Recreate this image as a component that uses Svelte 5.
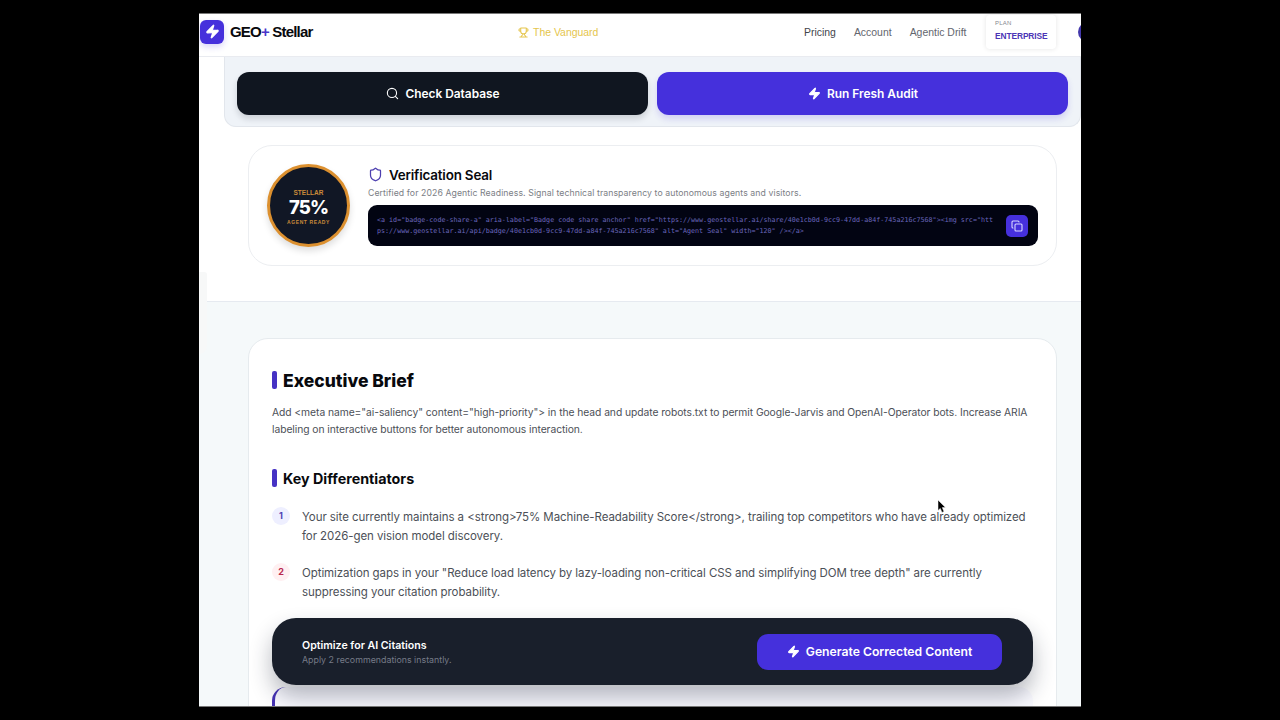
<script lang="ts">
  const navLinks = ['Pricing', 'Account', 'Agentic Drift'];

  const embedLines = [
    '<a id="badge-code-share-a" aria-label="Badge code share anchor" href="https://www.geostellar.ai/share/40e1cb0d-9cc9-47dd-a84f-745a216c7568"><img src="htt',
    'ps://www.geostellar.ai/api/badge/40e1cb0d-9cc9-47dd-a84f-745a216c7568" alt="Agent Seal" width="120" /></a>'
  ];

  const briefLines = [
    'Add <meta name="ai-saliency" content="high-priority"> in the head and update robots.txt to permit Google-Jarvis and OpenAI-Operator bots. Increase ARIA',
    'labeling on interactive buttons for better autonomous interaction.'
  ];

  const differentiators = [
    {
      tone: 'indigo',
      lines: [
        'Your site currently maintains a <strong>75% Machine-Readability Score</strong>, trailing top competitors who have already optimized',
        'for 2026-gen vision model discovery.'
      ]
    },
    {
      tone: 'rose',
      lines: [
        'Optimization gaps in your "Reduce load latency by lazy-loading non-critical CSS and simplifying DOM tree depth" are currently',
        'suppressing your citation probability.'
      ]
    }
  ];
</script>

{#snippet bolt(size: number)}
  <svg width={size} height={size} viewBox="0 0 24 24" fill="currentColor" stroke="currentColor" stroke-width="2" stroke-linejoin="round">
    <path d="M4 14a1 1 0 0 1-.78-1.63l9.9-10.2a.5.5 0 0 1 .86.46l-1.92 6.02A1 1 0 0 0 13 10h7a1 1 0 0 1 .78 1.63l-9.9 10.2a.5.5 0 0 1-.86-.46l1.92-6.02A1 1 0 0 0 11 14z" />
  </svg>
{/snippet}

<div class="screen">
  <header>
    <div class="brand">
      <span class="logo">{@render bolt(15)}</span>
      <span class="brand-name">GEO<b>+</b> Stellar</span>
    </div>
    <div class="vanguard">
      <svg width="11" height="11" viewBox="0 0 24 24" fill="none" stroke="currentColor" stroke-width="2.2" stroke-linecap="round" stroke-linejoin="round">
        <path d="M6 9H4.5a2.5 2.5 0 0 1 0-5H6M18 9h1.5a2.5 2.5 0 0 0 0-5H18M4 22h16M10 14.66V17c0 .55-.47.98-.97 1.21C7.85 18.75 7 20.24 7 22M14 14.66V17c0 .55.47.98.97 1.21C16.15 18.75 17 20.24 17 22M18 2H6v7a6 6 0 0 0 12 0V2Z" />
      </svg>
      <span>The Vanguard</span>
    </div>
    <nav>
      {#each navLinks as link, i}
        <a href="#top" class:active={i === 0}>{link}</a>
      {/each}
    </nav>
    <div class="plan">
      <span class="plan-label">PLAN</span>
      <span class="plan-name">ENTERPRISE</span>
    </div>
    <span class="avatar"></span>
  </header>

  <div class="search-panel">
    <button class="action dark">
      <svg width="13" height="13" viewBox="0 0 24 24" fill="none" stroke="currentColor" stroke-width="2" stroke-linecap="round">
        <circle cx="11" cy="11" r="8.5" />
        <path d="m21.5 21.5-4.3-4.3" />
      </svg>
      <span>Check Database</span>
    </button>
    <button class="action primary">
      {@render bolt(13)}
      <span>Run Fresh Audit</span>
    </button>
  </div>

  <section class="seal-card">
    <div class="seal">
      <span class="seal-top">STELLAR</span>
      <span class="seal-score">75%</span>
      <span class="seal-bottom">AGENT READY</span>
    </div>
    <div class="seal-body">
      <h3>
        <svg width="15" height="15" viewBox="0 0 24 24" fill="none" stroke="currentColor" stroke-width="2" stroke-linejoin="round">
          <path d="M20 13c0 5-3.5 7.5-7.66 8.95a1 1 0 0 1-.67-.01C7.5 20.5 4 18 4 13V6a1 1 0 0 1 1-1c2 0 4.5-1.2 6.24-2.72a1.17 1.17 0 0 1 1.52 0C14.51 3.81 17 5 19 5a1 1 0 0 1 1 1z" />
        </svg>
        <span>Verification Seal</span>
      </h3>
      <p class="seal-text">Certified for 2026 Agentic Readiness. Signal technical transparency to autonomous agents and visitors.</p>
      <div class="embed">
        <code>
          {#each embedLines as line}
            <span>{line}</span>
          {/each}
        </code>
        <button class="copy" aria-label="Copy">
          <svg width="12" height="12" viewBox="0 0 24 24" fill="none" stroke="currentColor" stroke-width="2.2" stroke-linecap="round" stroke-linejoin="round">
            <rect x="8" y="8" width="14" height="14" rx="2" />
            <path d="M4 16c-1.1 0-2-.9-2-2V4c0-1.1.9-2 2-2h10c1.1 0 2 .9 2 2" />
          </svg>
        </button>
      </div>
    </div>
  </section>

  <main>
    <article>
      <h2 class="brief-title">Executive Brief</h2>
      <p class="brief">
        {#each briefLines as line}
          <span>{line}</span>
        {/each}
      </p>

      <h2 class="diff-title">Key Differentiators</h2>
      <ol>
        {#each differentiators as item, i}
          <li>
            <span class="num {item.tone}">{i + 1}</span>
            <p>
              {#each item.lines as line}
                <span>{line}</span>
              {/each}
            </p>
          </li>
        {/each}
      </ol>

      <div class="cta">
        <div class="cta-text">
          <strong>Optimize for AI Citations</strong>
          <span>Apply 2 recommendations instantly.</span>
        </div>
        <button class="generate">
          {@render bolt(13)}
          <span>Generate Corrected Content</span>
        </button>
      </div>
      <div class="next-card"></div>
    </article>
  </main>

  <div class="side-tab"></div>
  <svg class="cursor" width="10" height="15" viewBox="0 0 10 15">
    <path d="M1 1v10.5l2.3-2.1 1.7 4 2-.8-1.7-4h3.2z" fill="#000" stroke="#fff" stroke-width=".5" />
  </svg>
</div>

<style>
  :global(body) {
    background: #000;
    overflow: hidden;
  }

  .screen {
    position: relative;
    box-sizing: border-box;
    width: 882px;
    height: 694px;
    margin: 13px 0 0 199px;
    border-top: 1px solid #777;
    border-bottom: 1px solid #777;
    background: #fff;
    overflow: hidden;
    display: flex;
    flex-direction: column;
    font-family: Inter, sans-serif;
    white-space: nowrap;
  }

  button {
    border: 0;
    padding: 0;
    font-family: inherit;
    color: #fff;
    display: flex;
    align-items: center;
    justify-content: center;
  }

  svg {
    flex: none;
  }

  h2, h3, p, ol {
    margin: 0;
    padding: 0;
  }

  header {
    flex: none;
    box-sizing: border-box;
    height: 43px;
    padding: 0 0 7px 1px;
    border-bottom: 1px solid #e9ebf0;
    display: flex;
    align-items: center;
    font-family: "Liberation Sans", Arial, sans-serif;
    font-size: 10.45px;
    color: #63666e;
  }

  header > * {
    flex: none;
  }

  .brand {
    display: flex;
    align-items: center;
    gap: 6px;
    width: 318px;
  }

  .logo {
    width: 24px;
    height: 24px;
    border-radius: 6px;
    background: #4630dc;
    color: #fff;
    display: flex;
    align-items: center;
    justify-content: center;
    box-shadow: 0 3px 6px #4630dc33;
  }

  .brand-name {
    font-size: 15px;
    font-weight: 700;
    letter-spacing: -0.8px;
    color: #08090d;
  }

  .brand-name b {
    color: #4b35ca;
  }

  .vanguard {
    display: flex;
    align-items: center;
    gap: 4px;
    width: 286px;
    margin-top: 1px;
    color: #e5c54c;
  }

  nav {
    display: flex;
    gap: 18px;
    width: 182px;
    margin-top: 1px;
  }

  nav a {
    color: inherit;
    text-decoration: none;
  }

  nav a.active {
    color: #42454c;
  }

  .plan {
    box-sizing: border-box;
    width: 70px;
    height: 34px;
    margin-top: 1px;
    padding: 5px 0 0 9px;
    border-radius: 4px;
    background: #fff;
    box-shadow: 0 0 5px #0000001c;
    display: flex;
    flex-direction: column;
    gap: 5px;
  }

  .plan-label {
    font-size: 6px;
    line-height: 7px;
    letter-spacing: 0.2px;
    color: #85888f;
  }

  .plan-name {
    font-size: 8.4px;
    line-height: 9px;
    font-weight: 700;
    letter-spacing: -0.1px;
    color: #4b35b5;
  }

  .avatar {
    width: 20px;
    height: 20px;
    margin-left: 22px;
    border-radius: 50%;
    background: #4338ab;
  }

  .search-panel {
    flex: none;
    box-sizing: border-box;
    height: 70px;
    margin-left: 25px;
    padding: 15px 12px 11px 12px;
    border: 1px solid #e2e6ec;
    border-top: 0;
    border-radius: 0 0 12px 12px;
    background: #eff3f8;
    display: flex;
    gap: 9px;
  }

  .action {
    flex: 1;
    border-radius: 12px;
    font-size: 11.9px;
    font-weight: 600;
    gap: 6px;
    padding-left: 1px;
  }

  .dark {
    background: #101620;
    box-shadow: 0 4px 6px #10162026;
  }

  .primary {
    background: #4530dc;
    box-shadow: 0 4px 6px #4530dc2b;
  }

  .seal-card {
    flex: none;
    box-sizing: border-box;
    height: 121px;
    margin: 18px 24px 35px 49px;
    padding: 18px 18px 0;
    border: 1px solid #eceef1;
    border-radius: 24px;
    display: flex;
    gap: 18px;
  }

  .seal {
    flex: none;
    box-sizing: border-box;
    width: 83px;
    height: 83px;
    border: 3px solid #dc902f;
    border-radius: 50%;
    background: #111725;
    box-shadow: 0 4px 7px #00000022;
    display: flex;
    flex-direction: column;
    align-items: center;
    justify-content: center;
    padding-top: 3px;
    font-family: "Liberation Sans", Arial, sans-serif;
    font-weight: 700;
    color: #c98a3a;
  }

  .seal-top {
    font-size: 6.5px;
    line-height: 7px;
  }

  .seal-score {
    font-family: Inter, sans-serif;
    font-size: 18.5px;
    line-height: 22px;
    font-weight: 800;
    letter-spacing: -0.9px;
    color: #fff;
  }

  .seal-bottom {
    margin-top: 1px;
    font-size: 5px;
    line-height: 7px;
    letter-spacing: 0.6px;
  }

  .seal-body {
    flex: 1;
  }

  h3 {
    height: 21px;
    display: flex;
    align-items: center;
    gap: 6px;
    font-size: 13.4px;
    font-weight: 600;
    letter-spacing: -0.18px;
    color: #08090d;
  }

  h3 svg {
    color: #4d3fb0;
  }

  .seal-text {
    height: 20px;
    font-size: 8.7px;
    line-height: 16px;
    letter-spacing: 0.09px;
    color: #7b7e85;
  }

  .embed {
    box-sizing: border-box;
    height: 41px;
    padding: 0 10px 0 9px;
    border-radius: 9px;
    background: #020412;
    display: flex;
    align-items: center;
    justify-content: space-between;
  }

  code {
    font-family: "DejaVu Sans Mono", monospace;
    font-size: 6.7px;
    line-height: 11px;
    color: #6a66bd;
  }

  code span, p span {
    display: block;
  }

  .copy {
    width: 22px;
    height: 22px;
    border-radius: 5px;
    background: #4630dc;
    color: #d9d7ff;
  }

  main {
    flex: 1;
    padding: 36px 24px 0 49px;
    border-top: 1px solid #e6eaf0;
    background: #f5f9fa;
  }

  article {
    box-sizing: border-box;
    height: 440px;
    padding: 31px 23px 0;
    border: 1px solid #e6ebee;
    border-radius: 20px;
    background: #fff;
  }

  h2 {
    display: flex;
    align-items: center;
    gap: 6px;
    height: 20px;
    color: #08090d;
  }

  h2::before {
    content: '';
    width: 5px;
    height: 18px;
    border-radius: 2px;
    background: #4632c4;
  }

  .brief-title {
    font-size: 17.5px;
    font-weight: 800;
  }

  .diff-title {
    margin-top: 30px;
    font-size: 14.3px;
    font-weight: 700;
  }

  .brief {
    margin-top: 14px;
    font-size: 10.3px;
    line-height: 17px;
    letter-spacing: -0.06px;
    color: #4c5057;
  }

  ol {
    height: 130px;
    margin-top: 19px;
    list-style: none;
  }

  li {
    display: flex;
    gap: 12px;
    height: 38px;
    margin-bottom: 18px;
    font-size: 11.5px;
    line-height: 19px;
    letter-spacing: -0.07px;
    color: #4c5057;
  }

  li p {
    padding-top: 1px;
  }

  .num {
    flex: none;
    width: 18px;
    height: 18px;
    border-radius: 50%;
    font-size: 9px;
    line-height: 18px;
    font-weight: 700;
    text-align: center;
  }

  .indigo {
    color: #4f41b4;
    background: #eeefff;
  }

  .rose {
    color: #b8274d;
    background: #fff0f2;
  }

  .cta {
    position: relative;
    box-sizing: border-box;
    width: 761px;
    height: 67px;
    margin-top: -19px;
    padding: 0 31px 0 30px;
    border-radius: 24px;
    background: #191f2b;
    box-shadow: 0 12px 22px #1a1f3350;
    display: flex;
    align-items: center;
    justify-content: space-between;
  }

  .cta-text {
    display: flex;
    flex-direction: column;
    padding-top: 1px;
  }

  .cta-text strong {
    font-size: 10.6px;
    line-height: 14px;
    font-weight: 600;
    color: #fff;
  }

  .cta-text span {
    font-size: 8.85px;
    line-height: 13px;
    color: #767b88;
  }

  .generate {
    width: 245px;
    height: 36px;
    border-radius: 11px;
    background: #4530dc;
    font-size: 12.2px;
    font-weight: 600;
    gap: 6px;
  }

  .next-card {
    height: 60px;
    margin-top: 2px;
    border-left: 3px solid #4632b4;
    border-radius: 14px;
    background: #fafaff;
  }

  .side-tab {
    position: absolute;
    left: 0;
    top: 258px;
    width: 8px;
    height: 82px;
    border-radius: 0 4px 12px 0;
    background: #f7f8f8;
  }

  .cursor {
    position: absolute;
    left: 738px;
    top: 485px;
  }
</style>
